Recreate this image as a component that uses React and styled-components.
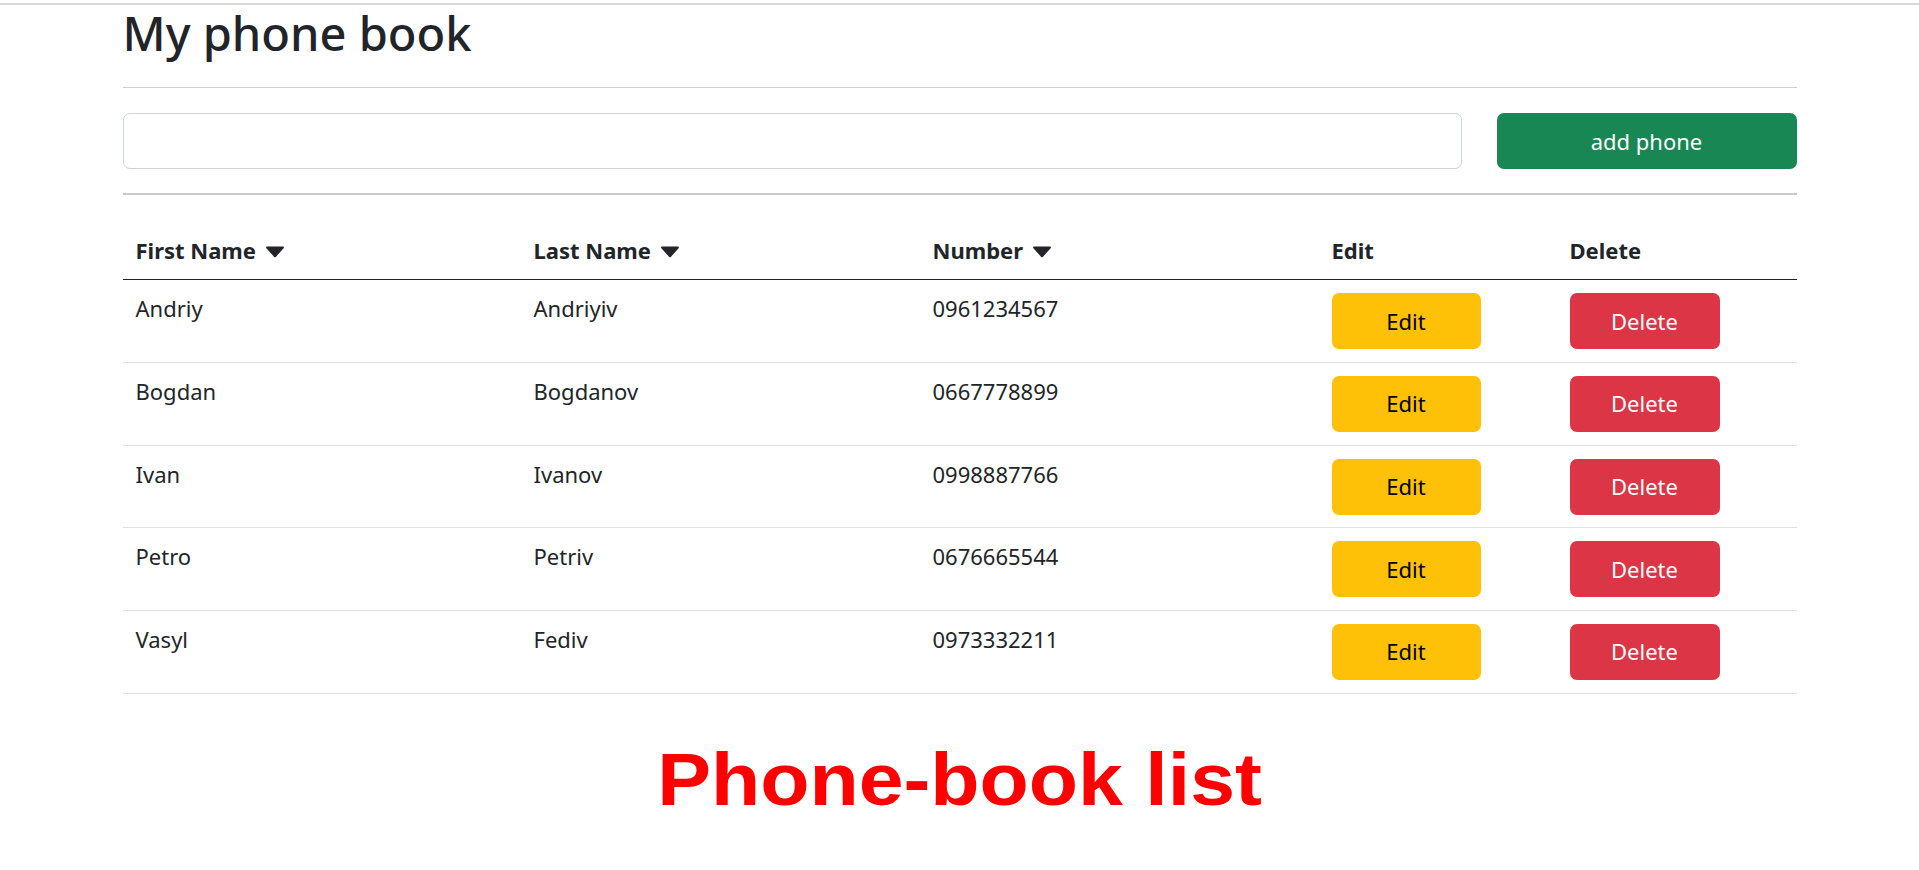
import React, { useState } from "react";
import styled, { createGlobalStyle } from "styled-components";

const contacts = [
  { first: "Andriy", last: "Andriyiv", number: "0961234567" },
  { first: "Bogdan", last: "Bogdanov", number: "0667778899" },
  { first: "Ivan", last: "Ivanov", number: "0998887766" },
  { first: "Petro", last: "Petriv", number: "0676665544" },
  { first: "Vasyl", last: "Fediv", number: "0973332211" },
];

// small filled triangle next to sortable headings
const Caret = () => (
  <svg width="18" height="12" viewBox="0 0 18 12" fill="currentColor">
    <path d="M1.2 0.5h15.6c1 0 1.5 1.1 0.8 1.8L9.8 10.9c-0.4 0.5-1.2 0.5-1.6 0L0.4 2.3C-0.3 1.6 0.2 0.5 1.2 0.5z" />
  </svg>
);

const App = () => {
  const [phone, setPhone] = useState("");
  return (
    <>
      <GlobalStyle />
      <TopRule />
      <Container>
        <Title>My phone book</Title>
        <Rule />
        <Form onSubmit={(e) => e.preventDefault()}>
          <Input value={phone} onChange={(e) => setPhone(e.target.value)} />
          <Button variant="add" type="submit">
            add phone
          </Button>
        </Form>
        <Rule thick />
        <Table>
          <colgroup>
            <col style={{ width: 398 }} />
            <col style={{ width: 399 }} />
            <col style={{ width: 399 }} />
            <col style={{ width: 238 }} />
            <col />
          </colgroup>
          <thead>
            <tr>
              <Th>
                <Sort>
                  First Name <Caret />
                </Sort>
              </Th>
              <Th>
                <Sort>
                  Last Name <Caret />
                </Sort>
              </Th>
              <Th>
                <Sort>
                  Number <Caret />
                </Sort>
              </Th>
              <Th>Edit</Th>
              <Th>Delete</Th>
            </tr>
          </thead>
          <tbody>
            {contacts.map((c) => (
              <tr key={c.number}>
                <Td>{c.first}</Td>
                <Td>{c.last}</Td>
                <Td>{c.number}</Td>
                <Td>
                  <Button variant="edit">Edit</Button>
                </Td>
                <Td>
                  <Button variant="delete">Delete</Button>
                </Td>
              </tr>
            ))}
          </tbody>
        </Table>
      </Container>
      <Caption>Phone-book list</Caption>
    </>
  );
};

export default App;

const GlobalStyle = createGlobalStyle`
  body {
    margin: 0;
    background: #fff;
    color: #212529;
    font-family: "Noto Sans", "Open Sans", sans-serif;
    font-size: 22px;
  }
  * { box-sizing: border-box; }
`;

const TopRule = styled.div`
  margin-top: 3px;
  border-top: 2px solid #d9d9d9;
`;

const Container = styled.div`
  width: 1674px;
  margin: 0 auto;
`;

const Title = styled.h1`
  margin: 0;
  font-size: 47px;
  font-weight: 500;
  line-height: 1.2;
`;

const Rule = styled.hr`
  margin: ${({ thick }) => (thick ? "24px 0 29px" : "26px 0 25px")};
  border: 0;
  border-top: ${({ thick }) => (thick ? "2px solid #c9c9c9" : "1px solid #cfcfcf")};
`;

const Form = styled.form`
  display: flex;
  gap: 35px;
`;

const Input = styled.input`
  flex: 1;
  height: 56px;
  border: 1px solid #ced4da;
  border-radius: 7px;
  padding: 0 16px;
  font: inherit;
  outline: none;
`;

const colors = {
  add: { bg: "#198754", fg: "#fff", w: "300px" },
  edit: { bg: "#ffc107", fg: "#000", w: "149px" },
  delete: { bg: "#dc3545", fg: "#fff", w: "150px" },
};

const Button = styled.button`
  display: block;
  width: ${({ variant }) => colors[variant].w};
  height: 56px;
  border: 0;
  border-radius: 7px;
  background: ${({ variant }) => colors[variant].bg};
  color: ${({ variant }) => colors[variant].fg};
  font: inherit;
  line-height: 1.5;
  cursor: pointer;
`;

const Table = styled.table`
  width: 100%;
  border-collapse: collapse;
  table-layout: fixed;
`;

const Th = styled.th`
  text-align: left;
  font-weight: 700;
  line-height: 30px;
  padding: 11px 13px 14px;
  border-bottom: 1px solid #212529;
`;

const Sort = styled.span`
  display: inline-flex;
  align-items: center;
  gap: 10px;

  svg {
    margin-top: 3px;
  }
`;

const Td = styled.td`
  vertical-align: top;
  line-height: 30px;
  padding: 12.85px 13px;
  border-bottom: 1px solid #dee2e6;
`;

const Caption = styled.h2`
  margin: 42px 0 0;
  text-align: center;
  color: #ff0000;
  font-family: "Liberation Sans", Arial, sans-serif;
  font-size: 75px;
  font-weight: 700;
  line-height: 1.15;
  transform: scaleX(1.075);
`;
